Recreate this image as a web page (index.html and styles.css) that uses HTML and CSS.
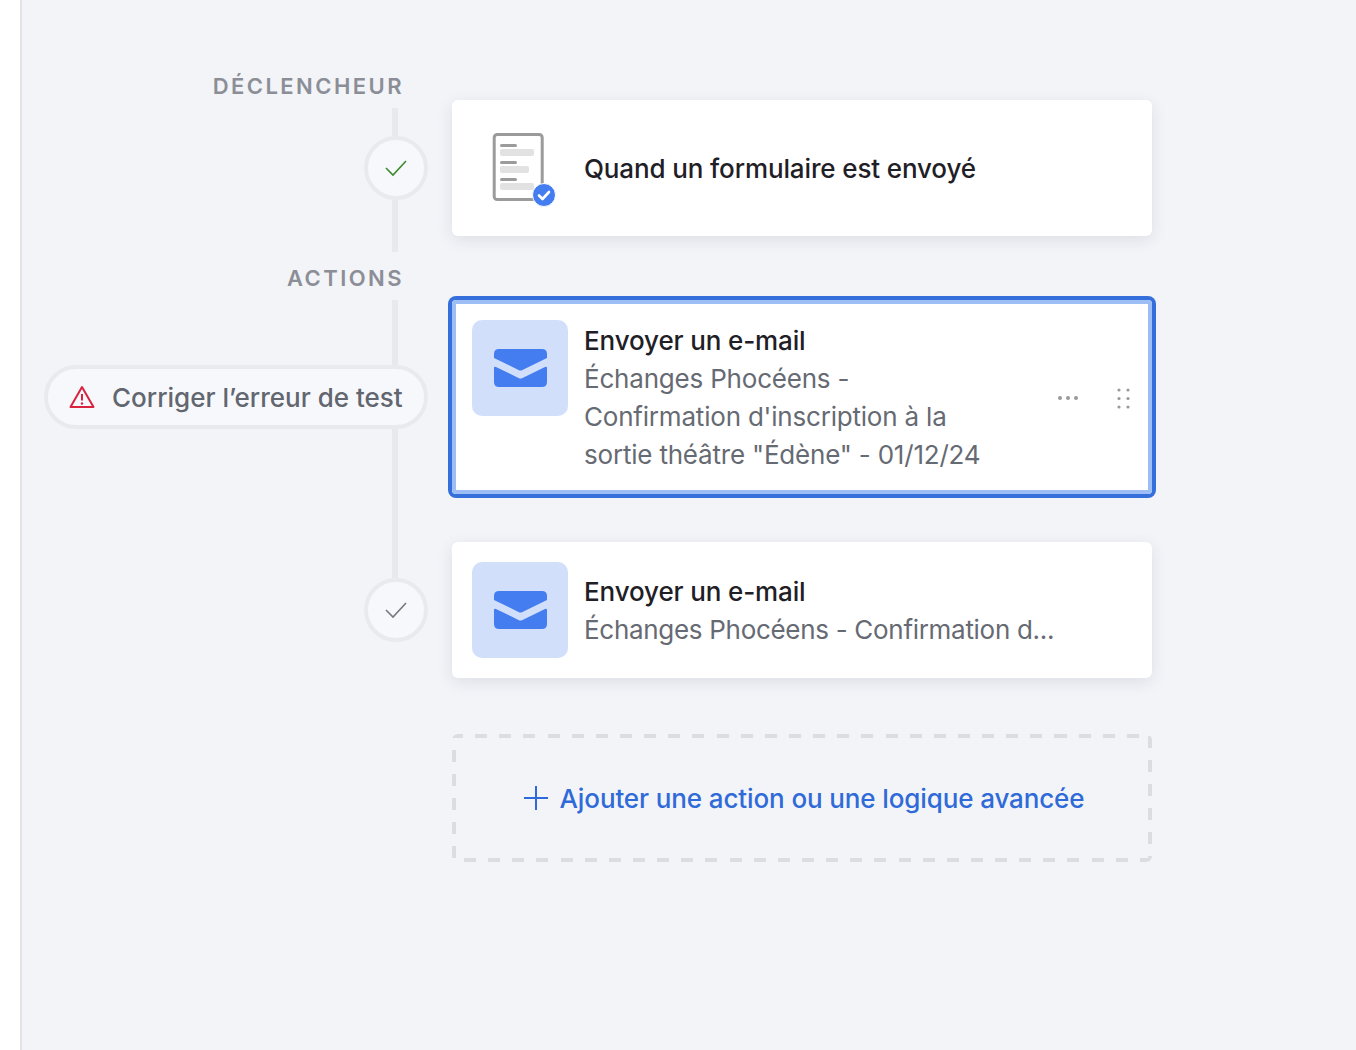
FILE: index.html
```html
<!DOCTYPE html>
<html lang="fr">
<head>
<meta charset="utf-8">
<title>Automatisation</title>
<link rel="stylesheet" href="styles.css">
</head>
<body>
<div class="page">
  <aside class="side"></aside>
  <main class="flow">
    <div class="gutter">
      <div class="label label-first">Déclencheur</div>
      <div class="rail rail-a"></div>
      <div class="node">
        <svg width="24" height="18" viewBox="0 0 24 18"><path d="M2 9l7 7L22 2" fill="none" stroke="#3c8a2e" stroke-width="1.6"/></svg>
      </div>
      <div class="rail rail-b"></div>
      <div class="label">Actions</div>
      <div class="rail rail-c"></div>
      <div class="pill">
        <svg width="26" height="24" viewBox="0 0 26 24"><path d="M13 2L24.5 22H1.500Z" fill="none" stroke="#d9233f" stroke-width="2" stroke-linejoin="round"/><path d="M13 9v6.500" stroke="#d9233f" stroke-width="2"/><circle cx="13" cy="18.500" r="1.200" fill="#d9233f"/></svg>
        <span class="nudge">Corriger l’erreur de test</span>
      </div>
      <div class="rail rail-d"></div>
      <div class="node">
        <svg width="24" height="18" viewBox="0 0 24 18"><path d="M2 9l7 7L22 2" fill="none" stroke="#77787e" stroke-width="1.6"/></svg>
      </div>
    </div>
    <div class="cards">
      <section class="card">
        <div class="thumb">
          <svg width="96" height="96" viewBox="0 0 96 96">
            <rect x="22.200" y="14.500" width="48" height="65" rx="3" fill="#fff" stroke="#9b9b9b" stroke-width="3"/>
            <rect x="28" y="24" width="17" height="3" rx="1.500" fill="#9b9b9b"/>
            <rect x="28" y="29" width="34" height="7" rx="2" fill="#e2e2e2"/>
            <rect x="28" y="41" width="17" height="3" rx="1.500" fill="#9b9b9b"/>
            <rect x="28" y="46" width="29" height="7" rx="2" fill="#e2e2e2"/>
            <rect x="28" y="58" width="17" height="3" rx="1.500" fill="#9b9b9b"/>
            <rect x="28" y="63" width="34" height="7" rx="2" fill="#e2e2e2"/>
            <circle cx="72" cy="75" r="11.500" fill="#447df0" stroke="#fff" stroke-width="1"/>
            <path d="M67 75.500l3.500 3.500 6.500-7" fill="none" stroke="#fff" stroke-width="2.600" stroke-linecap="round" stroke-linejoin="round"/>
          </svg>
        </div>
        <div class="nudge"><div class="title">Quand un formulaire est envoyé</div></div>
      </section>
      <section class="card card-selected">
        <div class="thumb thumb-blue">
          <svg width="53" height="38" viewBox="0 0 53 38"><path d="M0 5Q0 0 5 0H48Q53 0 53 5V9L28.500 21Q26.500 22 24.500 21L0 9Z" fill="#447df0"/><path d="M0 19Q0 17 2 18L24.500 29Q26.500 30 28.500 29L51 18Q53 17 53 19V33Q53 38 48 38H5Q0 38 0 33Z" fill="#447df0"/></svg>
        </div>
        <div class="text-wrap">
          <div class="title">Envoyer un e-mail</div>
          <div class="sub">Échanges Phocéens - Confirmation d'inscription à la sortie théâtre "Édène" - 01/12/24</div>
        </div>
        <div class="tools">
          <svg width="20" height="4" viewBox="0 0 20 4"><circle cx="2" cy="2" r="2" fill="#9a9a9e"/><circle cx="10" cy="2" r="2" fill="#9a9a9e"/><circle cx="18" cy="2" r="2" fill="#9a9a9e"/></svg>
          <svg width="13" height="21" viewBox="0 0 13 21"><circle cx="2" cy="2" r="1.600" fill="#9a9a9e"/><circle cx="11" cy="2" r="1.600" fill="#9a9a9e"/><circle cx="2" cy="10.500" r="1.600" fill="#9a9a9e"/><circle cx="11" cy="10.500" r="1.600" fill="#9a9a9e"/><circle cx="2" cy="19" r="1.600" fill="#9a9a9e"/><circle cx="11" cy="19" r="1.600" fill="#9a9a9e"/></svg>
        </div>
      </section>
      <section class="card">
        <div class="thumb thumb-blue">
          <svg width="53" height="38" viewBox="0 0 53 38"><path d="M0 5Q0 0 5 0H48Q53 0 53 5V9L28.500 21Q26.500 22 24.500 21L0 9Z" fill="#447df0"/><path d="M0 19Q0 17 2 18L24.500 29Q26.500 30 28.500 29L51 18Q53 17 53 19V33Q53 38 48 38H5Q0 38 0 33Z" fill="#447df0"/></svg>
        </div>
        <div class="nudge">
          <div class="title">Envoyer un e-mail</div>
          <div class="sub">Échanges Phocéens - Confirmation d...</div>
        </div>
      </section>
      <button class="add">
        <svg width="24" height="24" viewBox="0 0 24 24"><path d="M12 0v24M0 12h24" stroke="#2f6ad9" stroke-width="2"/></svg>
        <span class="nudge">Ajouter une action ou une logique avancée</span>
      </button>
    </div>
  </main>
</div>
</body>
</html>
```

FILE: styles.css
```css
html, body {
  margin: 0;
  height: 100%;
  overflow: hidden;
  background: #f3f4f8;
}
body {
  font-family: "Inter", "Liberation Sans", sans-serif;
  font-size: 26px;
  line-height: 38px;
  color: #1e2026;
}
.page {
  display: flex;
  height: 1050px;
}
.side {
  width: 20px;
  background: #fff;
  border-right: 2px solid #e3e4e8;
  flex: none;
}
.flow {
  display: flex;
  gap: 24px;
  padding-left: 22px;
  align-items: flex-start;
}
.gutter {
  width: 384px;
  padding-top: 74px;
  display: flex;
  flex-direction: column;
  align-items: flex-end;
}
.label {
  height: 24px;
  line-height: 24px;
  margin: 14px 24px 10px 0;
  font-size: 22px;
  font-weight: 600;
  letter-spacing: 2.45px;
  text-transform: uppercase;
  color: #8b8e96;
}
.label-first {
  margin-top: 0;
}
.rail {
  width: 6px;
  margin-right: 30px;
  background: #e8e9ed;
}
.rail-a { height: 28px; }
.rail-b { height: 52px; }
.rail-c { height: 65px; }
.rail-d { height: 149px; }
.node {
  width: 64px;
  height: 64px;
  box-sizing: border-box;
  border: 4px solid #e9eaee;
  border-radius: 50%;
  background: #f7f8fc;
  display: flex;
  align-items: center;
  justify-content: center;
}
.pill {
  width: 384px;
  height: 64px;
  box-sizing: border-box;
  border: 4px solid #e9eaee;
  border-radius: 32px;
  background: #f7f8fc;
  display: flex;
  align-items: center;
  gap: 17px;
  padding-left: 21px;
  color: #62666f;
  font-weight: 500;
  white-space: nowrap;
}
.cards {
  width: 700px;
  padding-top: 100px;
  display: flex;
  flex-direction: column;
}
.card {
  box-sizing: border-box;
  min-height: 136px;
  padding: 20px;
  background: #fff;
  border-radius: 6px;
  box-shadow: 0 4px 16px rgba(30, 35, 60, 0.1);
  display: flex;
  align-items: center;
  gap: 16px;
  margin-bottom: 48px;
}
.card:first-child {
  margin-bottom: 64px;
}
.card-selected {
  align-items: flex-start;
  border-radius: 4px;
  box-shadow: 0 0 0 4px #356fdc, inset 0 0 0 4px #9dbdf5;
}
.thumb {
  width: 96px;
  height: 96px;
  flex: none;
  border-radius: 10px;
  display: flex;
  align-items: center;
  justify-content: center;
}
.thumb-blue {
  background: #d2dffb;
}
.nudge {
  padding-top: 2px;
}
.title {
  font-weight: 500;
  letter-spacing: -0.13px;
}
.sub {
  color: #666a73;
  letter-spacing: -0.3px;
}
.text-wrap {
  width: 412px;
  padding-top: 2px;
  flex: none;
}
.text-wrap .sub {
  letter-spacing: -0.2px;
}
.tools {
  align-self: center;
  display: flex;
  align-items: center;
  gap: 39px;
  margin-left: auto;
  padding: 2px 2px 0 0;
}
.add {
  box-sizing: border-box;
  width: 700px;
  height: 128px;
  margin-top: 8px;
  padding: 0 0 0 4px;
  border: 0;
  border-radius: 6px;
  background-color: transparent;
  background-repeat: no-repeat;
  background-image:
    repeating-linear-gradient(90deg, #dcdde1 0 11px, transparent 11px 23.14px, #dcdde1 23.14px 24.14px),
    repeating-linear-gradient(90deg, transparent 0 12px, #dcdde1 12px 24px, transparent 24px 24.14px),
    repeating-linear-gradient(180deg, #dcdde1 0 4px, transparent 4px 16px, #dcdde1 16px 24px),
    repeating-linear-gradient(180deg, transparent 0 2px, #dcdde1 2px 14px, transparent 14px 24px);
  background-size: 100% 4px, 100% 4px, 4px 100%, 4px 100%;
  background-position: left top, left bottom, left top, right top;
  font: inherit;
  font-weight: 500;
  letter-spacing: -0.12px;
  color: #2f6ad9;
  display: flex;
  align-items: center;
  justify-content: center;
  gap: 12px;
}
```
